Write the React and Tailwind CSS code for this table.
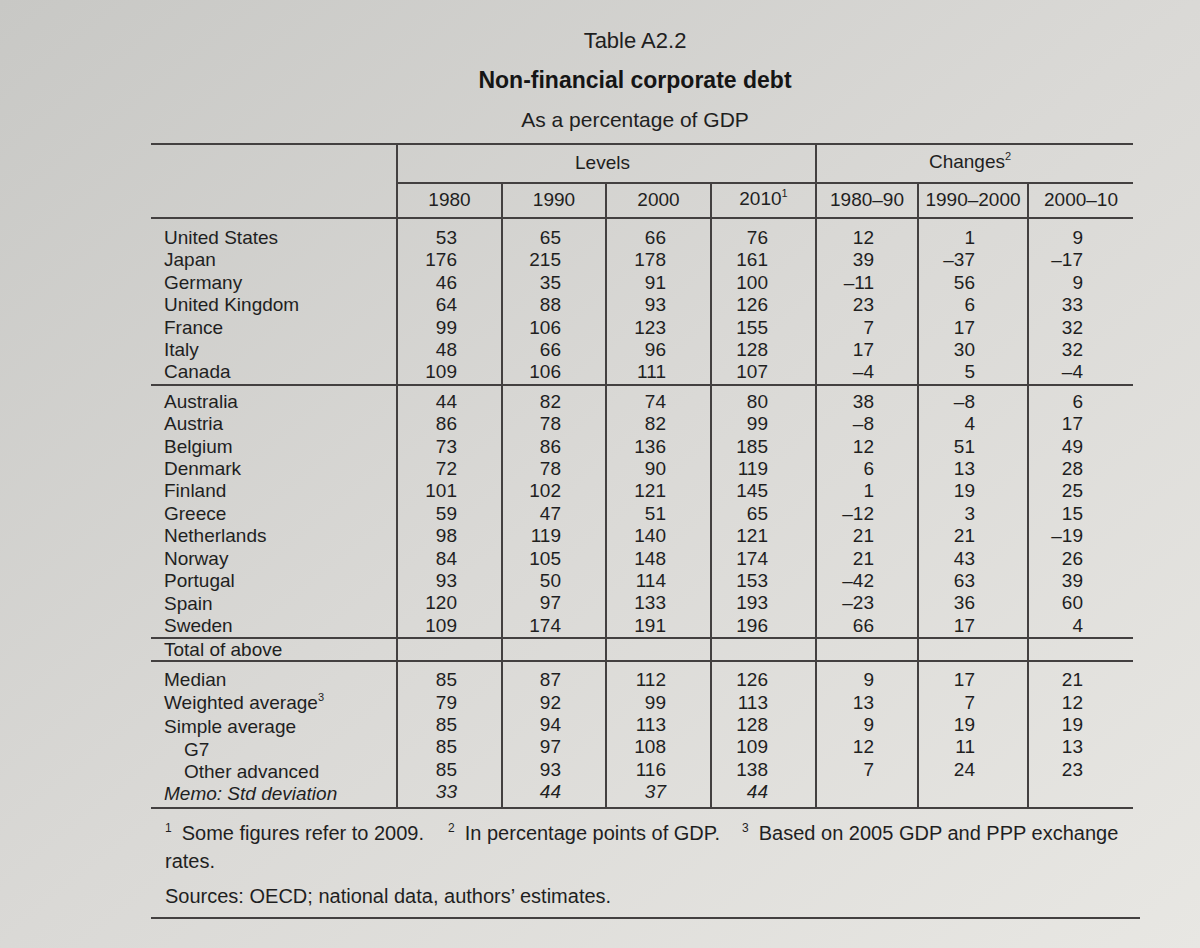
import React from "react";

const COLS = "grid grid-cols-[245px_105px_104px_105px_105px_102px_110px_106px]";
const PR = ["pr-[44px]", "pr-[44px]", "pr-[44px]", "pr-[47px]", "pr-[43px]", "pr-[52px]", "pr-[50px]"];

const block1 = [
  ["United States", "53", "65", "66", "76", "12", "1", "9"],
  ["Japan", "176", "215", "178", "161", "39", "–37", "–17"],
  ["Germany", "46", "35", "91", "100", "–11", "56", "9"],
  ["United Kingdom", "64", "88", "93", "126", "23", "6", "33"],
  ["France", "99", "106", "123", "155", "7", "17", "32"],
  ["Italy", "48", "66", "96", "128", "17", "30", "32"],
  ["Canada", "109", "106", "111", "107", "–4", "5", "–4"],
];

const block2 = [
  ["Australia", "44", "82", "74", "80", "38", "–8", "6"],
  ["Austria", "86", "78", "82", "99", "–8", "4", "17"],
  ["Belgium", "73", "86", "136", "185", "12", "51", "49"],
  ["Denmark", "72", "78", "90", "119", "6", "13", "28"],
  ["Finland", "101", "102", "121", "145", "1", "19", "25"],
  ["Greece", "59", "47", "51", "65", "–12", "3", "15"],
  ["Netherlands", "98", "119", "140", "121", "21", "21", "–19"],
  ["Norway", "84", "105", "148", "174", "21", "43", "26"],
  ["Portugal", "93", "50", "114", "153", "–42", "63", "39"],
  ["Spain", "120", "97", "133", "193", "–23", "36", "60"],
  ["Sweden", "109", "174", "191", "196", "66", "17", "4"],
];

const block3 = [
  ["Median", "85", "87", "112", "126", "9", "17", "21"],
  ["Weighted average", "79", "92", "99", "113", "13", "7", "12"],
  ["Simple average", "85", "94", "113", "128", "9", "19", "19"],
  ["G7", "85", "97", "108", "109", "12", "11", "13"],
  ["Other advanced", "85", "93", "116", "138", "7", "24", "23"],
  ["Memo: Std deviation", "33", "44", "37", "44", "", "", ""],
];

function Label({ text }) {
  if (text === "Weighted average") {
    return (
      <div>
        Weighted average<span className="relative top-[-8px] text-[11px]">3</span>
      </div>
    );
  }
  if (text === "G7" || text === "Other advanced") {
    return <div className="pl-[20px]">{text}</div>;
  }
  if (text === "Memo: Std deviation") {
    return <div className="italic">{text}</div>;
  }
  return <div>{text}</div>;
}

function Block({ rows, pt, pb = "pb-0" }) {
  return (
    <div className={`${COLS} border-b-2 border-[#434040]`}>
      <div className={`pl-[13px] ${pt} ${pb} flex flex-col`}>
        {rows.map((r) => (
          <Label key={r[0]} text={r[0]} />
        ))}
      </div>
      {PR.map((pr, c) => (
        <div
          key={c}
          className={`border-l-2 border-[#434040] flex flex-col items-end ${pr} ${pt} ${pb}`}
        >
          {rows.map((r, i) => (
            <div
              key={i}
              className={`h-[22.4px] ${r[0] === "Memo: Std deviation" ? "italic" : ""}`}
            >
              {r[c + 1]}
            </div>
          ))}
        </div>
      ))}
    </div>
  );
}

export default function App() {
  return (
    <div className="w-[1200px] h-[948px] overflow-hidden bg-linear-to-br from-[#c8c8c5] via-[#dad9d6] to-[#e8e7e3] text-[#1f1f1f] font-['Liberation_Sans','Arial',sans-serif]">
      <div className="pl-[151px] pt-[28px]">
        <div className="w-[982px] pr-[14px] flex flex-col items-center">
          <div className="text-[22px] leading-[26px]">Table A2.2</div>
          <div className="mt-[12px] text-[23px] leading-[28px] font-bold text-[#151515]">
            Non-financial corporate debt
          </div>
          <div className="mt-[13px] text-[21px] leading-[26px]">As a percentage of GDP</div>
        </div>

        <div className="mt-[10px] w-[982px] border-t-2 border-[#434040] text-[19px] leading-[22.4px]">
          <div className="grid grid-cols-[245px_419px_318px] h-[39px]">
            <div />
            <div className="border-l-2 border-b-2 border-[#434040] flex items-center justify-center pr-[8px]">
              Levels
            </div>
            <div className="border-l-2 border-b-2 border-[#434040] flex items-center justify-center pr-[10px]">
              <span>
                Changes<span className="relative top-[-8px] text-[11px]">2</span>
              </span>
            </div>
          </div>
          <div className={`${COLS} h-[35px] border-b-2 border-[#434040]`}>
            <div />
            {["1980", "1990", "2000", "2010", "1980–90", "1990–2000", "2000–10"].map((y) => (
              <div
                key={y}
                className="border-l-2 border-[#434040] flex items-center justify-center"
              >
                {y === "2010" ? (
                  <span>
                    2010<span className="relative top-[-8px] text-[11px]">1</span>
                  </span>
                ) : (
                  y
                )}
              </div>
            ))}
          </div>

          <Block rows={block1} pt="pt-[8px]" />
          <Block rows={block2} pt="pt-[5px]" />

          <div className={`${COLS} h-[23px] border-b-2 border-[#434040]`}>
            <div className="pl-[13px] leading-[21px]">Total of above</div>
            {PR.map((pr, c) => (
              <div key={c} className="border-l-2 border-[#434040]" />
            ))}
          </div>

          <Block rows={block3} pt="pt-[7px]" pb="pb-[1px]" />
        </div>

        <div className="w-[989px] pl-[14px] pt-[12px] pb-[8px] border-b-2 border-[#434040] text-[20px] leading-[25px]">
          <div>
            <span className="relative top-[-8px] text-[12px] mr-[10px]">1</span>
            Some figures refer to 2009.
            <span className="relative top-[-8px] text-[12px] ml-[24px] mr-[10px]">2</span>
            In percentage points of GDP.
            <span className="relative top-[-8px] text-[12px] ml-[22px] mr-[10px]">3</span>
            Based on 2005 GDP and PPP exchange
            <br />
            rates.
          </div>
          <div className="mt-[10px]">Sources: OECD; national data, authors’ estimates.</div>
        </div>
      </div>
    </div>
  );
}
